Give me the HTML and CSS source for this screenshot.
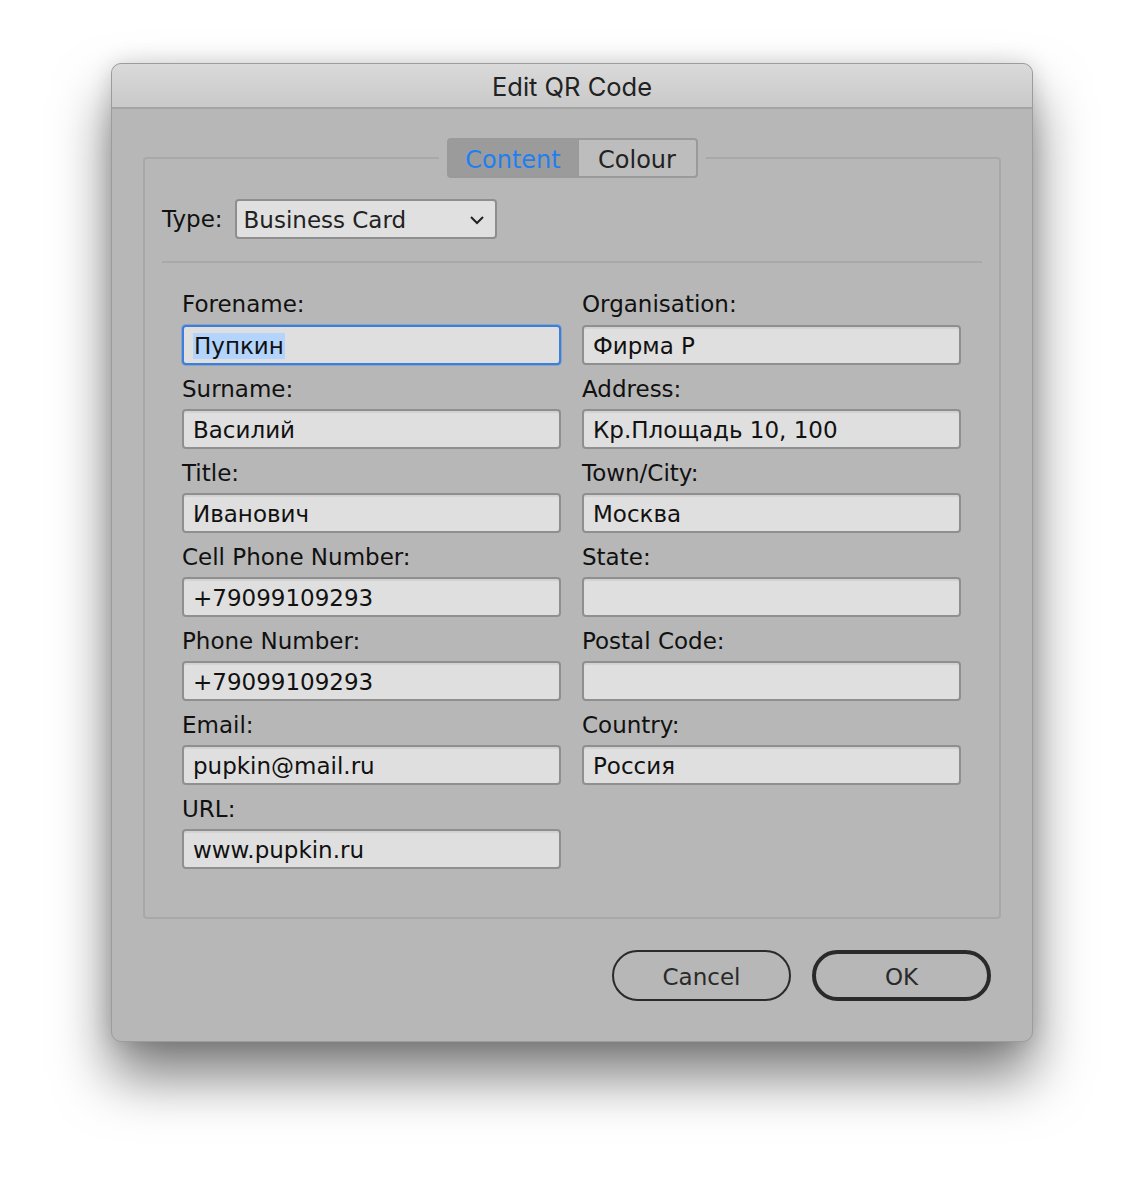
FILE: index.html
```html
<!DOCTYPE html>
<html>
<head>
<meta charset="utf-8">
<link rel="stylesheet" href="styles.css">
</head>
<body>
<div class="window">
  <div class="titlebar">Edit QR Code</div>
  <div class="content">
    <fieldset class="group">
      <legend class="tabs">
        <span class="tab tab-active">Content</span><span class="tab">Colour</span>
      </legend>
      <div class="type-row">
        <span class="label">Type:</span>
        <div class="select">
          <span>Business Card</span>
          <svg class="chevron" width="16" height="10" viewBox="0 0 16 10"><path d="M2 2 L8 8 L14 2" fill="none" stroke="#222" stroke-width="2"/></svg>
        </div>
      </div>
      <div class="separator"></div>
      <div class="form">
        <div class="col">
          <div class="label">Forename:</div>
          <div class="field focused"><span class="sel">Пупкин</span></div>
          <div class="label">Surname:</div>
          <div class="field">Василий</div>
          <div class="label">Title:</div>
          <div class="field">Иванович</div>
          <div class="label">Cell Phone Number:</div>
          <div class="field">+79099109293</div>
          <div class="label">Phone Number:</div>
          <div class="field">+79099109293</div>
          <div class="label">Email:</div>
          <div class="field">pupkin@mail.ru</div>
          <div class="label">URL:</div>
          <div class="field">www.pupkin.ru</div>
        </div>
        <div class="col">
          <div class="label">Organisation:</div>
          <div class="field">Фирма Р</div>
          <div class="label">Address:</div>
          <div class="field">Кр.Площадь 10, 100</div>
          <div class="label">Town/City:</div>
          <div class="field">Москва</div>
          <div class="label">State:</div>
          <div class="field"></div>
          <div class="label">Postal Code:</div>
          <div class="field"></div>
          <div class="label">Country:</div>
          <div class="field">Россия</div>
        </div>
      </div>
    </fieldset>
    <div class="buttons">
      <div class="btn">Cancel</div>
      <div class="btn btn-default">OK</div>
    </div>
  </div>
</div>
</body>
</html>
```

FILE: styles.css
```css
html, body {
  margin: 0;
  padding: 0;
  background: #ffffff;
}
body {
  padding: 63px 0 0 111px;
  height: 1202px;
  box-sizing: border-box;
  font-family: "DejaVu Sans", "Liberation Sans", sans-serif;
  color: #1a1a1a;
}
.window {
  width: 922px;
  height: 979px;
  box-sizing: border-box;
  border-radius: 10px;
  background: #b7b7b7;
  border: 1px solid #9c9c9c;
  box-shadow: 0 34px 56px rgba(0,0,0,0.52), 0 0 22px rgba(0,0,0,0.14);
  overflow: hidden;
  display: flex;
  flex-direction: column;
}
.titlebar {
  height: 45px;
  flex: none;
  border-bottom: 2px solid #a4a4a4;
  background: linear-gradient(#dadada, #c9c9c9);
  display: flex;
  align-items: center;
  justify-content: center;
  font-family: "Inter", "Open Sans", sans-serif;
  font-size: 25.5px;
  color: #222;
  padding-top: 2px;
  box-sizing: border-box;
}
.content {
  padding: 29px 31px 0 31px;
  display: flex;
  flex-direction: column;
}
.group {
  margin: 0;
  border: 2px solid #a8a8a8;
  border-radius: 4px;
  padding: 21px 17px 48px 17px;
  min-width: 0;
}
.tabs {
  margin: 0 auto;
  padding: 0 8px;
  display: flex;
}
.tab {
  display: inline-flex;
  align-items: center;
  justify-content: center;
  box-sizing: border-box;
  height: 40px;
  padding-top: 3px;
  font-size: 24px;
  color: #222;
  background: #bdbdbd;
  border: 2px solid #9a9a9a;
  border-left: none;
  width: 119px;
  border-radius: 0 4px 4px 0;
}
.tab-active {
  background: #9b9b9b;
  color: #1f7ff2;
  border-left: 2px solid #9a9a9a;
  border-right: 1px solid #9a9a9a;
  border-radius: 4px 0 0 4px;
  width: 132px;
}
.type-row {
  display: flex;
  align-items: center;
  gap: 12px;
}
.label {
  font-size: 23px;
  color: #111;
}
.select {
  width: 262px;
  height: 40px;
  box-sizing: border-box;
  border: 2px solid #8e8e8e;
  border-radius: 4px;
  background: #e0e0e0;
  display: flex;
  align-items: center;
  justify-content: space-between;
  padding: 2px 10px 0 7px;
  font-size: 23px;
  color: #222;
}
.chevron { margin-top: 0; }
.separator {
  height: 2px;
  background: #a9a9a9;
  margin: 22px 0 0 0;
}
.form {
  display: grid;
  grid-template-columns: 379px 379px;
  column-gap: 21px;
  padding: 0 0 0 20px;
}
.col {
  display: flex;
  flex-direction: column;
}
.col .label {
  height: 44px;
  display: flex;
  align-items: center;
  padding-top: 4px;
  box-sizing: border-box;
}
.col .label:first-child {
  height: 62px;
  padding-top: 20px;
}
.field {
  height: 40px;
  box-sizing: border-box;
  border: 2px solid #8f8f8f;
  border-radius: 4px;
  background: #dfdfdf;
  box-shadow: inset 0 2px 1px rgba(0,0,0,0.06);
  display: flex;
  align-items: center;
  padding: 2px 9px 0 9px;
  font-size: 23px;
  color: #111;
}
.field.focused {
  border-color: #3b7fdc;
  box-shadow: 0 0 0 1px rgba(59,127,220,0.35);
}
.sel {
  background: #b3d4fc;
  padding: 0 1px;
}
.buttons {
  display: flex;
  justify-content: flex-end;
  gap: 21px;
  margin-top: 31px;
  padding-right: 10px;
}
.btn {
  width: 179px;
  height: 51px;
  box-sizing: border-box;
  border: 2px solid #2a2a2a;
  border-radius: 26px;
  display: flex;
  align-items: center;
  justify-content: center;
  font-size: 23px;
  color: #2a2a2a;
  padding-top: 2px;
}
.btn-default {
  border-width: 4px;
}
```
